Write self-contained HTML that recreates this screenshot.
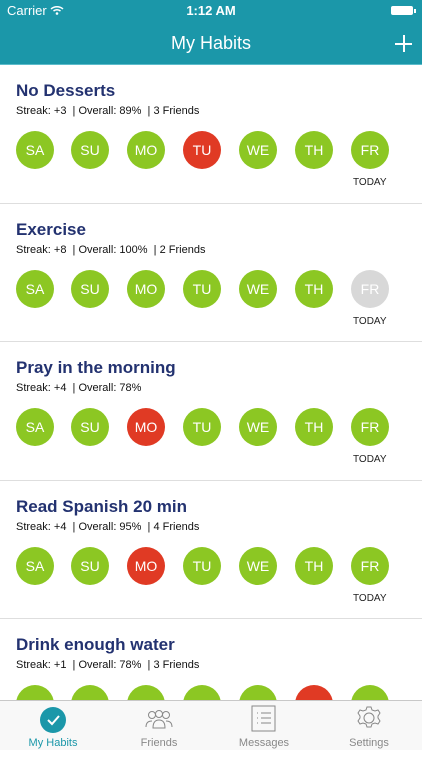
<!DOCTYPE html>
<html><head><meta charset="utf-8"><style>
*{margin:0;padding:0;box-sizing:border-box}
body{width:422px;height:750px;overflow:hidden;background:#fff;font-family:"Liberation Sans",sans-serif;position:relative}
.hdr{position:absolute;left:0;top:0;width:422px;height:65px;background:#1b97a9;border-bottom:1px solid #5cbccb;color:#fff}
.sec{position:absolute;left:0;width:422px;height:138.5px;border-bottom:1px solid #dedede}
.t{position:absolute;left:16px;top:16px;font-size:17px;font-weight:bold;color:#233270}
.s{position:absolute;left:16px;top:40px;font-size:11px;color:#111}
.c{position:absolute;top:66px;width:38px;height:38px;border-radius:50%;background:#8cc723;color:#fff;font-size:14px;text-align:center;line-height:38px}
.r{background:#e03a24}.g{background:#d8d8d8}
.td{position:absolute;left:353px;top:112px;font-size:10px;color:#222}
.tab{position:absolute;left:0;top:700px;width:422px;height:50px;background:#f8f8f8;border-top:1px solid #c8c8c8}
.tl{position:absolute;top:36px;font-size:11px;color:#888;width:100px;text-align:center}
</style></head><body>
<div class="hdr">
<div style="position:absolute;left:7px;top:3px;font-size:13px">Carrier <svg width="14" height="10" viewBox="0 0 14 10"><path d="M1 4a9 9 0 0 1 12 0M3.5 6a5.5 5.5 0 0 1 7 0" stroke="#fff" stroke-width="1.5" fill="none"/><circle cx="7" cy="8.5" r="1.3" fill="#fff"/></svg></div>
<div style="position:absolute;left:0;width:422px;text-align:center;top:3px;font-size:13px;font-weight:bold">1:12 AM</div>
<div style="position:absolute;left:391px;top:6px;width:22px;height:9px;background:#fff;border-radius:2px"></div><div style="position:absolute;left:414px;top:9px;width:2px;height:4px;background:#fff"></div>
<div style="position:absolute;left:0;width:422px;text-align:center;top:33px;font-size:18px">My Habits</div>
<div style="position:absolute;left:395px;top:43px;width:17px;height:1.5px;background:#fff"></div>
<div style="position:absolute;left:403px;top:35px;width:1.5px;height:17px;background:#fff"></div>
</div>

<div class="sec" style="top:65px"><div class="t">No Desserts</div><div class="s">Streak: +3 &nbsp;| Overall: 89% &nbsp;| 3 Friends</div>
<div class="c" style="left:16px">SA</div><div class="c" style="left:71px">SU</div><div class="c" style="left:127px">MO</div><div class="c r" style="left:183px">TU</div><div class="c" style="left:239px">WE</div><div class="c" style="left:295px">TH</div><div class="c" style="left:351px">FR</div><div class="td">TODAY</div></div>

<div class="sec" style="top:203.5px"><div class="t">Exercise</div><div class="s">Streak: +8 &nbsp;| Overall: 100% &nbsp;| 2 Friends</div>
<div class="c" style="left:16px">SA</div><div class="c" style="left:71px">SU</div><div class="c" style="left:127px">MO</div><div class="c" style="left:183px">TU</div><div class="c" style="left:239px">WE</div><div class="c" style="left:295px">TH</div><div class="c g" style="left:351px">FR</div><div class="td">TODAY</div></div>

<div class="sec" style="top:342px"><div class="t">Pray in the morning</div><div class="s">Streak: +4 &nbsp;| Overall: 78%</div>
<div class="c" style="left:16px">SA</div><div class="c" style="left:71px">SU</div><div class="c r" style="left:127px">MO</div><div class="c" style="left:183px">TU</div><div class="c" style="left:239px">WE</div><div class="c" style="left:295px">TH</div><div class="c" style="left:351px">FR</div><div class="td">TODAY</div></div>

<div class="sec" style="top:480.5px"><div class="t">Read Spanish 20 min</div><div class="s">Streak: +4 &nbsp;| Overall: 95% &nbsp;| 4 Friends</div>
<div class="c" style="left:16px">SA</div><div class="c" style="left:71px">SU</div><div class="c r" style="left:127px">MO</div><div class="c" style="left:183px">TU</div><div class="c" style="left:239px">WE</div><div class="c" style="left:295px">TH</div><div class="c" style="left:351px">FR</div><div class="td">TODAY</div></div>

<div class="sec" style="top:619px;border:none"><div class="t">Drink enough water</div><div class="s">Streak: +1 &nbsp;| Overall: 78% &nbsp;| 3 Friends</div>
<div class="c" style="left:16px"></div><div class="c" style="left:71px"></div><div class="c" style="left:127px"></div><div class="c" style="left:183px"></div><div class="c" style="left:239px"></div><div class="c r" style="left:295px"></div><div class="c" style="left:351px"></div></div>

<div class="tab">
<div style="position:absolute;left:40px;top:6px;width:26px;height:26px;border-radius:50%;background:#1b97a9"></div>
<svg style="position:absolute;left:40px;top:6px" width="26" height="26"><path d="M8 13l4 4 7-8" stroke="#fff" stroke-width="2" fill="none"/></svg>
<svg style="position:absolute;left:144px;top:6px" width="30" height="24" viewBox="0 0 30 24" fill="none" stroke="#888" stroke-width="1"><circle cx="8" cy="8" r="3.5"/><circle cx="15" cy="7" r="3.5"/><circle cx="22" cy="8" r="3.5"/><path d="M2 20c0-4 2-6 6-6M28 20c0-4-2-6-6-6M9 21c0-5 2-8 6-8s6 3 6 8z"/></svg>
<svg style="position:absolute;left:251px;top:4px" width="25" height="27"><rect x="1" y="1" width="23" height="25" fill="none" stroke="#888"/><g stroke="#888"><path d="M6 8h1M10 8h10M6 13h1M10 13h10M6 18h1M10 18h10"/></g></svg>
<svg style="position:absolute;left:356px;top:4px" width="26" height="26" viewBox="0 0 26 26" fill="none" stroke="#888"><circle cx="13" cy="13" r="5"/><path d="M11 2h4l1 3 3 1 3-1 2 3-2 3v2l2 3-2 3-3-1-3 1-1 3h-4l-1-3-3-1-3 1-2-3 2-3v-2l-2-3 2-3 3 1 3-1z"/></svg>
<div class="tl" style="left:3px;color:#1b97a9">My Habits</div>
<div class="tl" style="left:109px">Friends</div>
<div class="tl" style="left:214px">Messages</div>
<div class="tl" style="left:319px">Settings</div>
</div>
</body></html>
